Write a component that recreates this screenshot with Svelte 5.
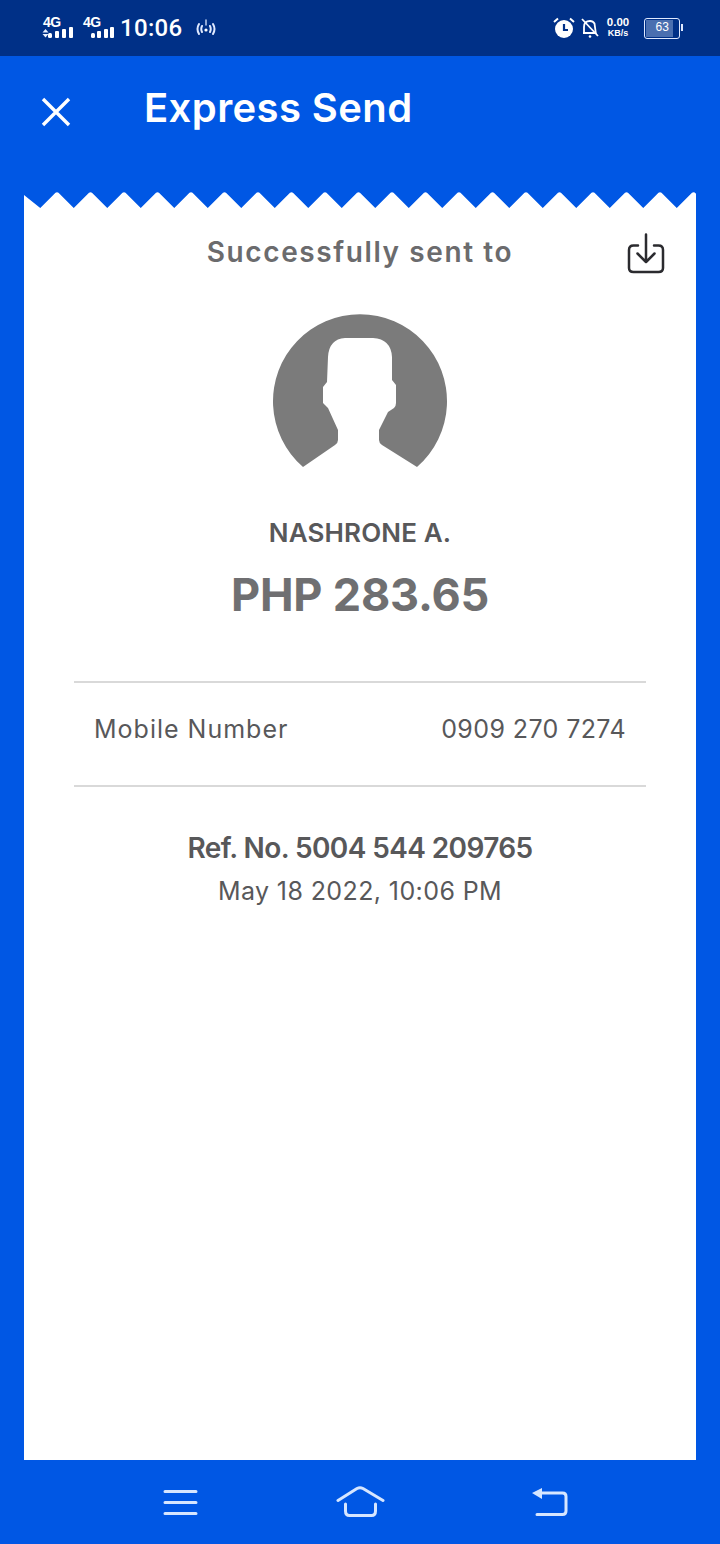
<script>
  // zigzag edge on top of the receipt, peaks every 33.5px
  const W = 672;
  const H = 16;
  const STEP = 33.5;
  let d = `M0 ${H + 1} L0 3`;
  for (let x = -0.5; x < W + STEP; x += STEP) {
    const v = x + STEP / 2;
    if (x > 0) {
      d += ` L${x - 3} 2.2 Q${x} -1.5 ${x + 3} 2.2`;
    }
    if (v < W) d += ` L${v} ${H}`;
  }
  d = d.replace(/ L[\d.]+ 2\.2 Q[\d.]+ -1\.5 [\d.]+ 2\.2$/, '');
  d += ` L${W} 3 L${W} ${H + 1} Z`;
</script>

<div class="screen">
  <div class="status">
    <div class="status-left">
      <span class="sig"><span class="net">4G</span>
        <svg width="32" height="24" viewBox="0 0 32 24"><path d="M0.500 16.500l3-3.500 3 3.500zM0.500 18h6l-3 3.500z" fill="#e8f0ff"/><rect x="6" y="17" width="4" height="5" rx="1.500" fill="#fff"/><rect x="13" y="15" width="4" height="7" rx="1" fill="#fff"/><rect x="20" y="13" width="4" height="9" rx="1" fill="#fff"/><rect x="27" y="11" width="4" height="11" rx="1" fill="#fff"/></svg>
      </span>
      <span class="sig second"><span class="net">4G</span>
        <svg width="32" height="24" viewBox="0 0 32 24"><rect x="9" y="17" width="4" height="5" rx="1.500" fill="#fff"/><rect x="15" y="15" width="4" height="7" rx="1" fill="#fff"/><rect x="22" y="13" width="4" height="9" rx="1" fill="#fff"/><rect x="28" y="11" width="4" height="11" rx="1" fill="#fff"/></svg>
      </span>
      <span class="time">10:06</span>
      <svg class="hotspot" width="22" height="18" viewBox="0 0 22 18" fill="none" stroke="#dfe9ff" stroke-width="2" stroke-linecap="round"><path d="M4 5q-3 5 0 10M7 7q-1.500 3 0 6M18 5q3 5 0 10M15 7q1.500 3 0 6"/><circle cx="11" cy="11" r="1.600" fill="#fff" stroke="none"/><path d="M11 1v5" stroke-width="1.300"/></svg>
    </div>
    <div class="status-right">
      <svg width="24" height="24" viewBox="0 0 24 24"><circle cx="12" cy="13" r="9" fill="#fff"/><path d="M12 8v6h4" fill="none" stroke="#003087" stroke-width="2.200"/><path d="M2 6l4-3.500M22 6l-4-3.500" stroke="#fff" stroke-width="2"/></svg>
      <svg width="20" height="24" viewBox="0 0 20 24" fill="none" stroke="#fff" stroke-width="1.800"><path d="M4 17V11q0-6 6-6 3 0 4.500 2.500L15.800 17H3"/><path d="M2 3l16 17"/><circle cx="10" cy="20.500" r="1.300" fill="#fff" stroke="none"/></svg>
      <div class="speed"><b>0.00</b><b class="unit">KB/s</b></div>
      <div class="battery"><span class="fill">63</span></div>
    </div>
  </div>

  <header class="top">
    <svg class="close" width="30" height="30" viewBox="0 0 30 30" stroke="#fff" stroke-width="3.400"><path d="M2 2l26 26M28 2L2 28"/></svg>
    <h1>Express Send</h1>
  </header>

  <main class="receipt">
    <svg class="edge" width={W} height={H} viewBox="0 0 {W} {H}"><path {d} fill="#fff"/></svg>
    <div class="body">
      <div class="head">
        <span class="sent">Successfully sent to</span>
        <svg class="save" width="38" height="42" viewBox="0 0 38 42" fill="none" stroke="#2b2b2f" stroke-width="2.500" stroke-linecap="round" stroke-linejoin="round"><path d="M11 12.500H6.500Q2 12.500 2 17v18q0 4 4.500 4h25q4.500 0 4.500-4V17q0-4.500-4.500-4.500H27"/><path d="M19 1.500V28.500M10.500 20.500L19 29l8.500-8.500"/></svg>
      </div>

      <svg class="avatar" width="176" height="156" viewBox="0 0 176 156"><path fill="#7b7b7b" d="M31 153 A87 87 0 1 1 145 153 L110 131 Q107 129 107 126 L107 116 L116 98 L122 94 Q124 92 124 89 L124 71 L120 66 L120 43 Q119 25 101 24 L73 24 Q57 25 56 43 L55 68 L51 73 L51 89 L56 94 L66 116 L66 126 Q66 129 63 131 Z"/></svg>

      <div class="name">NASHRONE A.</div>
      <div class="amount">PHP 283.65</div>

      <div class="row">
        <span class="label">Mobile Number</span>
        <span>0909 270 7274</span>
      </div>

      <div class="ref">Ref. No. 5004 544 209765</div>
      <div class="date">May 18 2022, 10:06 PM</div>
    </div>
  </main>

  <nav class="bottom">
    <svg width="36" height="30" viewBox="0 0 36 30" stroke="#d6e6ff" stroke-width="3" stroke-linecap="round"><path d="M2 5.500h31M2 16.500h31M2 27.500h31"/></svg>
    <svg width="50" height="34" viewBox="0 0 50 34" fill="none" stroke="#d6e6ff" stroke-width="3" stroke-linecap="round" stroke-linejoin="round"><path d="M3 16.500L22 4.500q3-1.500 6 0L48 16.500"/><path d="M10.500 20v7q0 4.500 4 4.500h22q4 0 4-4.500v-7"/></svg>
    <svg class="back" width="38" height="32" viewBox="0 0 38 32" fill="none" stroke="#d6e6ff" stroke-width="3" stroke-linecap="round" stroke-linejoin="round"><path d="M9 8h22.500q3.500 0 3.500 3.500V26q0 3.500-3.500 3.500H6"/><path d="M11 3L1 8l10 6z" fill="#d6e6ff" stroke="none"/></svg>
  </nav>
</div>

<style>
  :global(body) {
    margin: 0;
    background: #0057e4;
  }

  .screen {
    width: 720px;
    height: 1544px;
    display: flex;
    flex-direction: column;
    background: #0057e4;
    font-family: Inter, sans-serif;
    overflow: hidden;
  }

  .status {
    height: 56px;
    flex: none;
    background: #003087;
    color: #fff;
    display: flex;
    justify-content: space-between;
    align-items: center;
    padding: 0 40px 0 42px;
    box-sizing: border-box;
  }

  .status-left,
  .status-right {
    display: flex;
    align-items: center;
  }

  .sig {
    position: relative;
    width: 32px;
    height: 24px;
    display: block;
  }

  .sig svg {
    display: block;
  }

  .second {
    margin-left: 8px;
  }

  .net {
    position: absolute;
    left: 1px;
    top: -1px;
    font: 700 14px "Liberation Sans", sans-serif;
    line-height: 14px;
    letter-spacing: -0.5px;
  }

  .time {
    font: 500 24px Roboto, sans-serif;
    margin-left: 6px;
    letter-spacing: 0.3px;
  }

  .hotspot {
    margin-left: 13px;
  }

  .status-right svg {
    margin-right: 4px;
  }

  .speed {
    display: flex;
    flex-direction: column;
    align-items: center;
    font: 700 11.500px/11px "Liberation Sans", sans-serif;
    width: 28px;
  }

  .unit {
    font-size: 9px;
  }

  .battery {
    width: 32px;
    height: 17px;
    margin-left: 12px;
    border: 1.500px solid #dfe9ff;
    border-radius: 3px;
    padding: 1px;
    position: relative;
  }

  .battery::after {
    content: "";
    position: absolute;
    right: -4px;
    top: 5px;
    width: 2px;
    height: 7px;
    background: #dfe9ff;
  }

  .fill {
    display: block;
    width: 70%;
    height: 100%;
    background: #4a6fb0;
    font: 400 12px/15px "Liberation Sans", sans-serif;
    text-align: center;
    padding-left: 5px;
  }

  .top {
    height: 136px;
    flex: none;
    display: flex;
    align-items: flex-start;
    box-sizing: border-box;
    padding: 26px 0 0 41px;
  }

  .close {
    margin-top: 15px;
  }

  h1 {
    margin: 0 0 0 73px;
    font: 600 40px/52px Inter, sans-serif;
    letter-spacing: 0.4px;
    color: #fff;
  }

  .receipt {
    flex: 1;
    margin: 0 24px;
    display: flex;
    flex-direction: column;
    min-height: 0;
  }

  .edge {
    display: block;
    flex: none;
  }

  .body {
    flex: 1;
    background: #fff;
    display: flex;
    flex-direction: column;
    align-items: center;
    color: #58585a;
  }

  .head {
    position: relative;
    width: 100%;
    text-align: center;
    padding-top: 24px;
  }

  .sent {
    font: 600 28px/40px Inter, sans-serif;
    letter-spacing: 1.6px;
    color: #6b6b6d;
  }

  .save {
    position: absolute;
    right: 31px;
    top: 25px;
  }

  .avatar {
    margin-top: 42px;
  }

  .name {
    margin-top: 45px;
    font: 600 26px/36px Inter, sans-serif;
    letter-spacing: 0.15px;
  }

  .amount {
    margin-top: 14px;
    font: 700 45px/60px Inter, sans-serif;
    letter-spacing: -0.2px;
    color: #6f6f71;
  }

  .row {
    margin-top: 56px;
    width: 572px;
    height: 106px;
    box-sizing: border-box;
    padding: 0 20px 10px;
    border-top: 2px solid #d9d9d9;
    border-bottom: 2px solid #d9d9d9;
    display: flex;
    justify-content: space-between;
    align-items: center;
    font-size: 25px;
    letter-spacing: 0.4px;
  }

  .label {
    letter-spacing: 1px;
  }

  .ref {
    margin-top: 42px;
    font: 600 28px/38px Inter, sans-serif;
    letter-spacing: -0.6px;
  }

  .date {
    margin-top: 6px;
    font-size: 25px;
    line-height: 36px;
    letter-spacing: 0.4px;
  }

  .bottom {
    height: 84px;
    flex: none;
    display: flex;
    align-items: center;
    gap: 136px;
    padding: 0 0 3px 163px;
    box-sizing: border-box;
  }

  .back {
    margin-left: 10px;
  }
</style>
